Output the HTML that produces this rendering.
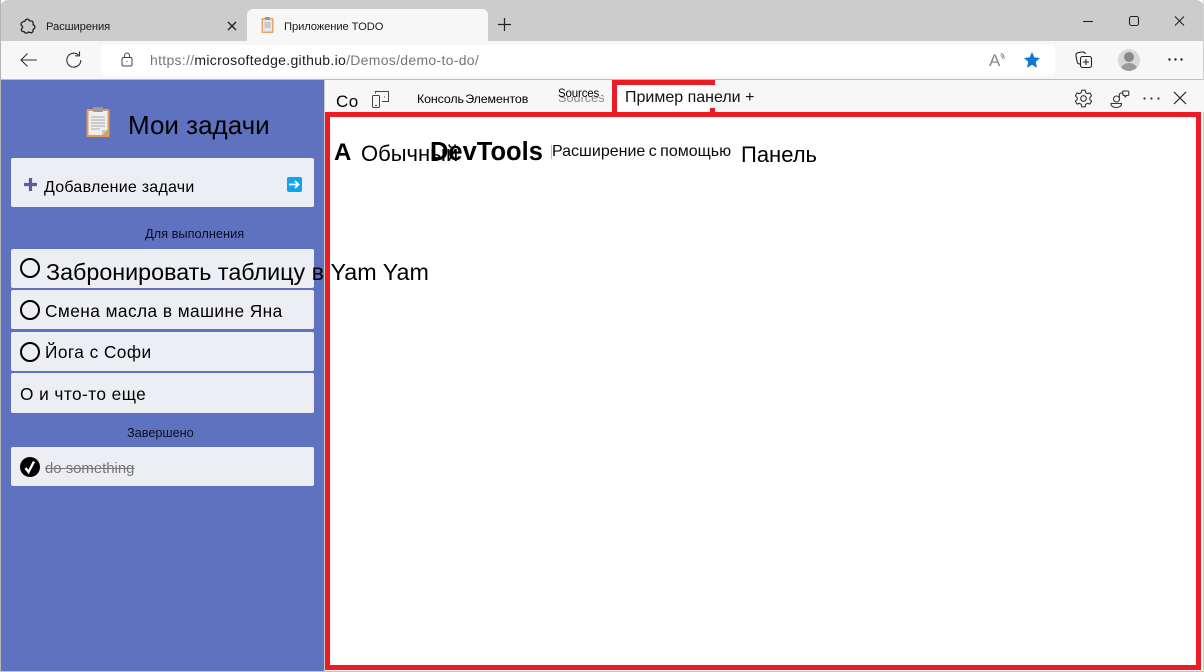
<!DOCTYPE html>
<html><head><meta charset="utf-8"><style>
html,body{margin:0;padding:0;background:#fff}
body{width:1204px;height:672px;position:relative;overflow:hidden;font-family:"Liberation Sans","Noto Sans CJK JP",sans-serif;color:#000}
.a{position:absolute}
.t{position:absolute;white-space:nowrap;line-height:1}
.card{position:absolute;left:11px;width:303px;background:#eceef3;border-radius:2px}
.ring{position:absolute;left:20px;width:16px;height:16px;border:2px solid #000;border-radius:50%}
svg{position:absolute;overflow:visible}
</style></head><body>
<div class="a" style="left:0;top:0;width:1204px;height:41px;background:#cccccc;border-radius:8px 8px 0 0"></div>
<div class="a" style="left:0;top:41px;width:1204px;height:38px;background:#f7f7f7"></div>
<div class="a" style="left:0;top:79px;width:1204px;height:1px;background:#bcbcbc"></div>
<div class="a" style="left:0;top:0;width:1px;height:672px;background:#b5b5b5"></div>
<div class="a" style="left:1203px;top:0;width:1px;height:672px;background:#d0d0d0"></div>
<div class="a" style="left:0;top:671px;width:1204px;height:1px;background:#c4c4c4"></div>
<!-- tab 1 -->
<svg style="left:20px;top:18px" width="16" height="16" viewBox="0 0 16 16" fill="none" stroke="#222" stroke-width="1.300" stroke-linejoin="round"><path d="M5.200 3C5.400 .6 8.800 .4 9.300 2.800C10.500 3 12 2.700 12.800 3.600C13.500 4.600 12.800 6 13 6.800C15.400 7.300 15.600 10.600 13.200 11.200C13.100 12.600 13.200 14 11.800 14.600C10.400 15 9.200 14.200 8.300 14C7.300 15.600 4.600 15.400 4.200 13.600C2.800 13.700 1.200 13 1.300 11.500C1.400 10.500 2.700 10 2.700 9C2.700 8 .8 7.700 .9 6C1.100 3.800 3.800 3.600 5.200 3Z"/></svg>
<div class="t" style="left:46px;top:21px;font-size:11.200px;letter-spacing:-.1px;color:#1a1a1a;line-height:12px">Расширения</div>
<svg style="left:227px;top:21px" width="10" height="10" fill="none" stroke="#222" stroke-width="1.400"><path d="M1 1L9 9M9 1L1 9"/></svg>
<!-- tab 2 -->
<div class="a" style="left:247px;top:9px;width:241px;height:32px;background:#f7f7f7;border-radius:6px 6px 0 0"></div>
<svg style="left:261px;top:17px" width="13" height="16" viewBox="0 0 13 16"><rect x=".5" y="1" width="12" height="15" rx="1" fill="#e8a566"/><rect x="2" y="2.500" width="9" height="12" fill="#e6e6e6"/><rect x="4" y="0" width="5" height="3" fill="#999"/><path d="M3.500 6H9.500M3.500 8H9.500M3.500 10H9.500" stroke="#aaa"/></svg>
<div class="t" style="left:284px;top:21px;font-size:11.200px;letter-spacing:-.1px;color:#1a1a1a;line-height:12px">Приложение TODO</div>
<svg style="left:497px;top:17px" width="15" height="15" fill="none" stroke="#222" stroke-width="1.200"><path d="M7.500 1V14M1 7.500H14"/></svg>
<!-- window controls -->
<svg style="left:1083px;top:15px" width="90" height="16" fill="none" stroke="#222" stroke-width="1.100"><path d="M0 6.500H10"/><rect x="46.500" y="1.500" width="9" height="9" rx="2"/><path d="M92 1.500L101 10.500M101 1.500L92 10.500"/></svg>
<!-- nav -->
<svg style="left:20px;top:52px" width="18" height="16" fill="none" stroke="#333" stroke-width="1.100"><path d="M1 8H17M7.500 1.500L1 8L7.500 14.500"/></svg>
<svg style="left:65px;top:51px" width="17" height="17" fill="none" stroke="#333" stroke-width="1.100"><path d="M13.500 4A7 7 0 1 0 15.800 9"/><path d="M14.500 .5V4.800H10.200"/></svg>
<div class="a" style="left:101px;top:45px;width:954px;height:30px;background:#fff;border-radius:4px"></div>
<svg style="left:121px;top:52px" width="12" height="15" fill="none" stroke="#444" stroke-width="1"><rect x="1" y="5.500" width="10" height="8.500" rx="1.500"/><path d="M3.500 5.500V3.500A2.500 2.500 0 0 1 8.500 3.500V5.500"/><path d="M5.500 9.500H6.500"/></svg>
<div class="t" style="left:150px;top:53px;font-size:14px;color:#767676;letter-spacing:.3px">https://<span style="color:#1c1c1c">microsoftedge.github.io</span>/Demos/demo-to-do/</div>
<div class="t" style="left:989px;top:52px;font-size:17px;color:#888">A</div>
<svg style="left:1000px;top:53px" width="6" height="9" fill="none" stroke="#777" stroke-width=".9"><path d="M.5 2.500C2 3 2.500 4 2.500 5.500M.8 .5C3 1 4.200 3 4.200 6"/></svg>
<svg style="left:1023px;top:51px" width="18" height="18" viewBox="0 0 18 18"><path d="M9 1L11.400 6.400L17 7L12.800 10.900L14 16.700L9 13.700L4 16.700L5.200 10.900L1 7L6.600 6.400Z" fill="#0f78d4"/></svg>
<svg style="left:1075px;top:51px" width="18" height="18" fill="none" stroke="#222" stroke-width="1.100"><rect x="5.500" y="5.500" width="11" height="11" rx="2"/><path d="M11 8V14M8 11H14M5 13C3 13 2.500 12.500 2 10L1 5C.7 3 1.500 2 3 1.700L7 1C9 .8 10 1.500 10.500 3"/></svg>
<div class="a" style="left:1118px;top:49px;width:22px;height:22px;border-radius:50%;background:#d8d8d8;overflow:hidden"><div class="a" style="left:6px;top:3px;width:10px;height:10px;border-radius:50%;background:#8a8a8a"></div><div class="a" style="left:3px;top:14px;width:16px;height:12px;border-radius:50%;background:#9a9a9a"></div></div>
<svg style="left:1168px;top:58px" width="15" height="4" fill="#222"><circle cx="1.500" cy="1.500" r="1.200"/><circle cx="7.500" cy="1.500" r="1.200"/><circle cx="13.500" cy="1.500" r="1.200"/></svg>
<!-- sidebar -->
<div class="a" style="left:1px;top:80px;width:323px;height:591px;background:#5f72bf"></div>
<svg style="left:86px;top:107px" width="24" height="30" viewBox="0 0 24 30"><rect x=".5" y="2" width="23" height="28" rx="1.500" fill="#e39a55"/><path d="M2.500 4H21.500V23L16 28H2.500Z" fill="#eeeeee"/><path d="M16 28L21.500 23H16Z" fill="#c9c9c9"/><rect x="7" y="0" width="10" height="5" rx="1" fill="#9b9b9b"/><path d="M5 10H19M5 13H19M5 16H19M5 19H19M5 22H14" stroke="#a8a8a8" stroke-width="1.100"/></svg>
<div class="t" style="left:128px;top:112px;font-size:26px;color:#000">Мои задачи</div>
<div class="card" style="top:158px;height:49px"></div>
<svg style="left:23px;top:177px" width="15" height="15"><path d="M7.500 1V14M1 7.500H14" stroke="#62589a" stroke-width="3.200"/></svg>
<div class="t" style="left:44px;top:180px;font-size:16px;letter-spacing:.24px">Добавление задачи</div>
<div class="a" style="left:287px;top:177px;width:15px;height:15px;border-radius:2px;background:#0ea5e9"></div>
<svg style="left:289px;top:180px" width="11" height="9" fill="none" stroke="#fff" stroke-width="1.800"><path d="M0 4.500H9M6 1L9.500 4.500L6 8"/></svg>
<div class="t" style="left:145px;top:228px;font-size:12.800px;color:#0c0c20">Для выполнения</div>
<div class="card" style="top:249px;height:39px"></div>
<div class="ring" style="top:258px"></div>
<div class="card" style="top:290px;height:39px"></div>
<div class="ring" style="top:300px"></div>
<div class="t" style="left:45px;top:303px;font-size:17.300px;letter-spacing:.44px">Смена масла в машине Яна</div>
<div class="card" style="top:332px;height:39px"></div>
<div class="ring" style="top:342px"></div>
<div class="t" style="left:45px;top:344px;font-size:17.300px;letter-spacing:.44px">Йога с Софи</div>
<div class="card" style="top:373px;height:40px"></div>
<div class="t" style="left:20px;top:386px;font-size:17.300px;letter-spacing:.43px">О и что-то еще</div>
<div class="t" style="left:127px;top:427px;font-size:12.700px;color:#0c0c20">Завершено</div>
<div class="card" style="top:447px;height:39px"></div>
<div class="a" style="left:20px;top:457px;width:20px;height:20px;border-radius:50%;background:#000"></div>
<svg style="left:24px;top:460px" width="12" height="14" fill="none" stroke="#fff" stroke-width="2.400"><path d="M1.500 8L4.500 12L10 1.500"/></svg>
<div class="t" style="left:45px;top:462px;font-size:14.900px;color:#777;text-decoration:line-through">do something</div>
<!-- devtools toolbar -->
<div class="a" style="left:324px;top:80px;width:1px;height:591px;background:#c8c8c8"></div>
<div class="a" style="left:325px;top:80px;width:879px;height:32px;background:#f7f7f7"></div>
<div class="t" style="left:336px;top:93px;font-size:17px;letter-spacing:.5px">Co</div>
<svg style="left:371px;top:90px" width="19" height="18" fill="none" stroke="#444" stroke-width="1"><path d="M4.500 3.500V1.500H17.500V11.500H11"/><rect x="1.500" y="5.500" width="7" height="12" rx="1"/><path d="M4 15.500H6M13 7H14"/></svg>
<div class="t" style="left:417px;top:93px;font-size:12.400px;letter-spacing:-.1px;word-spacing:-2px">Консоль Элементов</div>
<div class="t" style="left:558px;top:92px;font-size:12.700px;line-height:13px;color:#8a8a8a">Sources</div>
<div class="t" style="left:556px;top:88px;width:45px;height:9px;background:#f7f7f7"></div>
<div class="t" style="left:558px;top:89px;font-size:11.500px;color:#000;letter-spacing:-.15px">Sources</div>
<!-- red pane -->
<div class="a" style="left:325px;top:112px;width:876px;height:558px;box-sizing:border-box;border:5px solid #ed1c24;background:#fff"></div>
<div class="a" style="left:612px;top:80px;width:103px;height:5px;background:#ed1c24"></div>
<div class="a" style="left:612px;top:80px;width:5px;height:33px;background:#ed1c24"></div>
<div class="a" style="left:710px;top:108px;width:5px;height:5px;background:#ed1c24"></div>
<div class="a" style="left:617px;top:85px;width:93px;height:27px;background:#fff"></div>
<div class="t" style="left:625px;top:90px;font-size:16px;color:#111">Пример панели +</div>
<svg style="left:1074px;top:89px" width="19" height="19" viewBox="0 0 19 19" fill="none" stroke="#333" stroke-width="1.100" stroke-linejoin="round"><path d="M7.800 1.200H11.200L11.700 3.600L13.600 4.700L15.900 3.900L17.600 6.900L15.800 8.500V10.500L17.600 12.100L15.900 15.100L13.600 14.300L11.700 15.400L11.200 17.800H7.800L7.300 15.400L5.400 14.300L3.100 15.100L1.400 12.100L3.200 10.500V8.500L1.400 6.900L3.100 3.900L5.400 4.700L7.300 3.600Z"/><circle cx="9.500" cy="9.500" r="2.800"/></svg>
<svg style="left:1110px;top:90px" width="19" height="18" fill="none" stroke="#333" stroke-width="1.100" stroke-linejoin="round"><circle cx="6.500" cy="9" r="3"/><path d="M1 13.500H11.500C11.500 16 9.500 17.500 6.200 17.500C3 17.500 1 16 1 13.500Z"/><path d="M9.500 7.500C8.700 4.500 9.500 3 11.500 3H12.800"/><path d="M12.800 1H17.500C18.300 1 18.800 1.500 18.800 2.300V4.200C18.800 5 18.300 5.500 17.500 5.500H16.500L15 7.200V5.500H14.200C13.400 5.500 12.800 5 12.800 4.200Z"/></svg>
<svg style="left:1143px;top:97px" width="17" height="3" fill="#333"><circle cx="1.500" cy="1.500" r="1.100"/><circle cx="8.500" cy="1.500" r="1.100"/><circle cx="15.500" cy="1.500" r="1.100"/></svg>
<svg style="left:1173px;top:91px" width="14" height="14" fill="none" stroke="#222" stroke-width="1.200"><path d="M1 1L13 13M13 1L1 13"/></svg>
<!-- pane content -->
<div class="t" style="left:334px;top:141px;font-size:24px;font-weight:bold">A</div>
<div class="t" style="left:361px;top:144px;font-size:22px;line-height:20px">Обычный</div>
<div class="t" style="left:430px;top:140px;font-size:25.500px;font-weight:bold">DevTools</div>
<div class="a" style="left:551px;top:145px;width:1px;height:14px;background:#bbb"></div>
<div class="t" style="left:552px;top:144px;font-size:16px;word-spacing:-1px;color:#0a0a0a">Расширение с помощью</div>
<div class="t" style="left:741px;top:145px;font-size:22px;line-height:20px">Панель</div>
<!-- overflowing task text sits on top of the pane -->
<div class="t" style="left:46px;top:261px;font-size:23.300px">Забронировать таблицу в Yam Yam</div>
</body></html>
